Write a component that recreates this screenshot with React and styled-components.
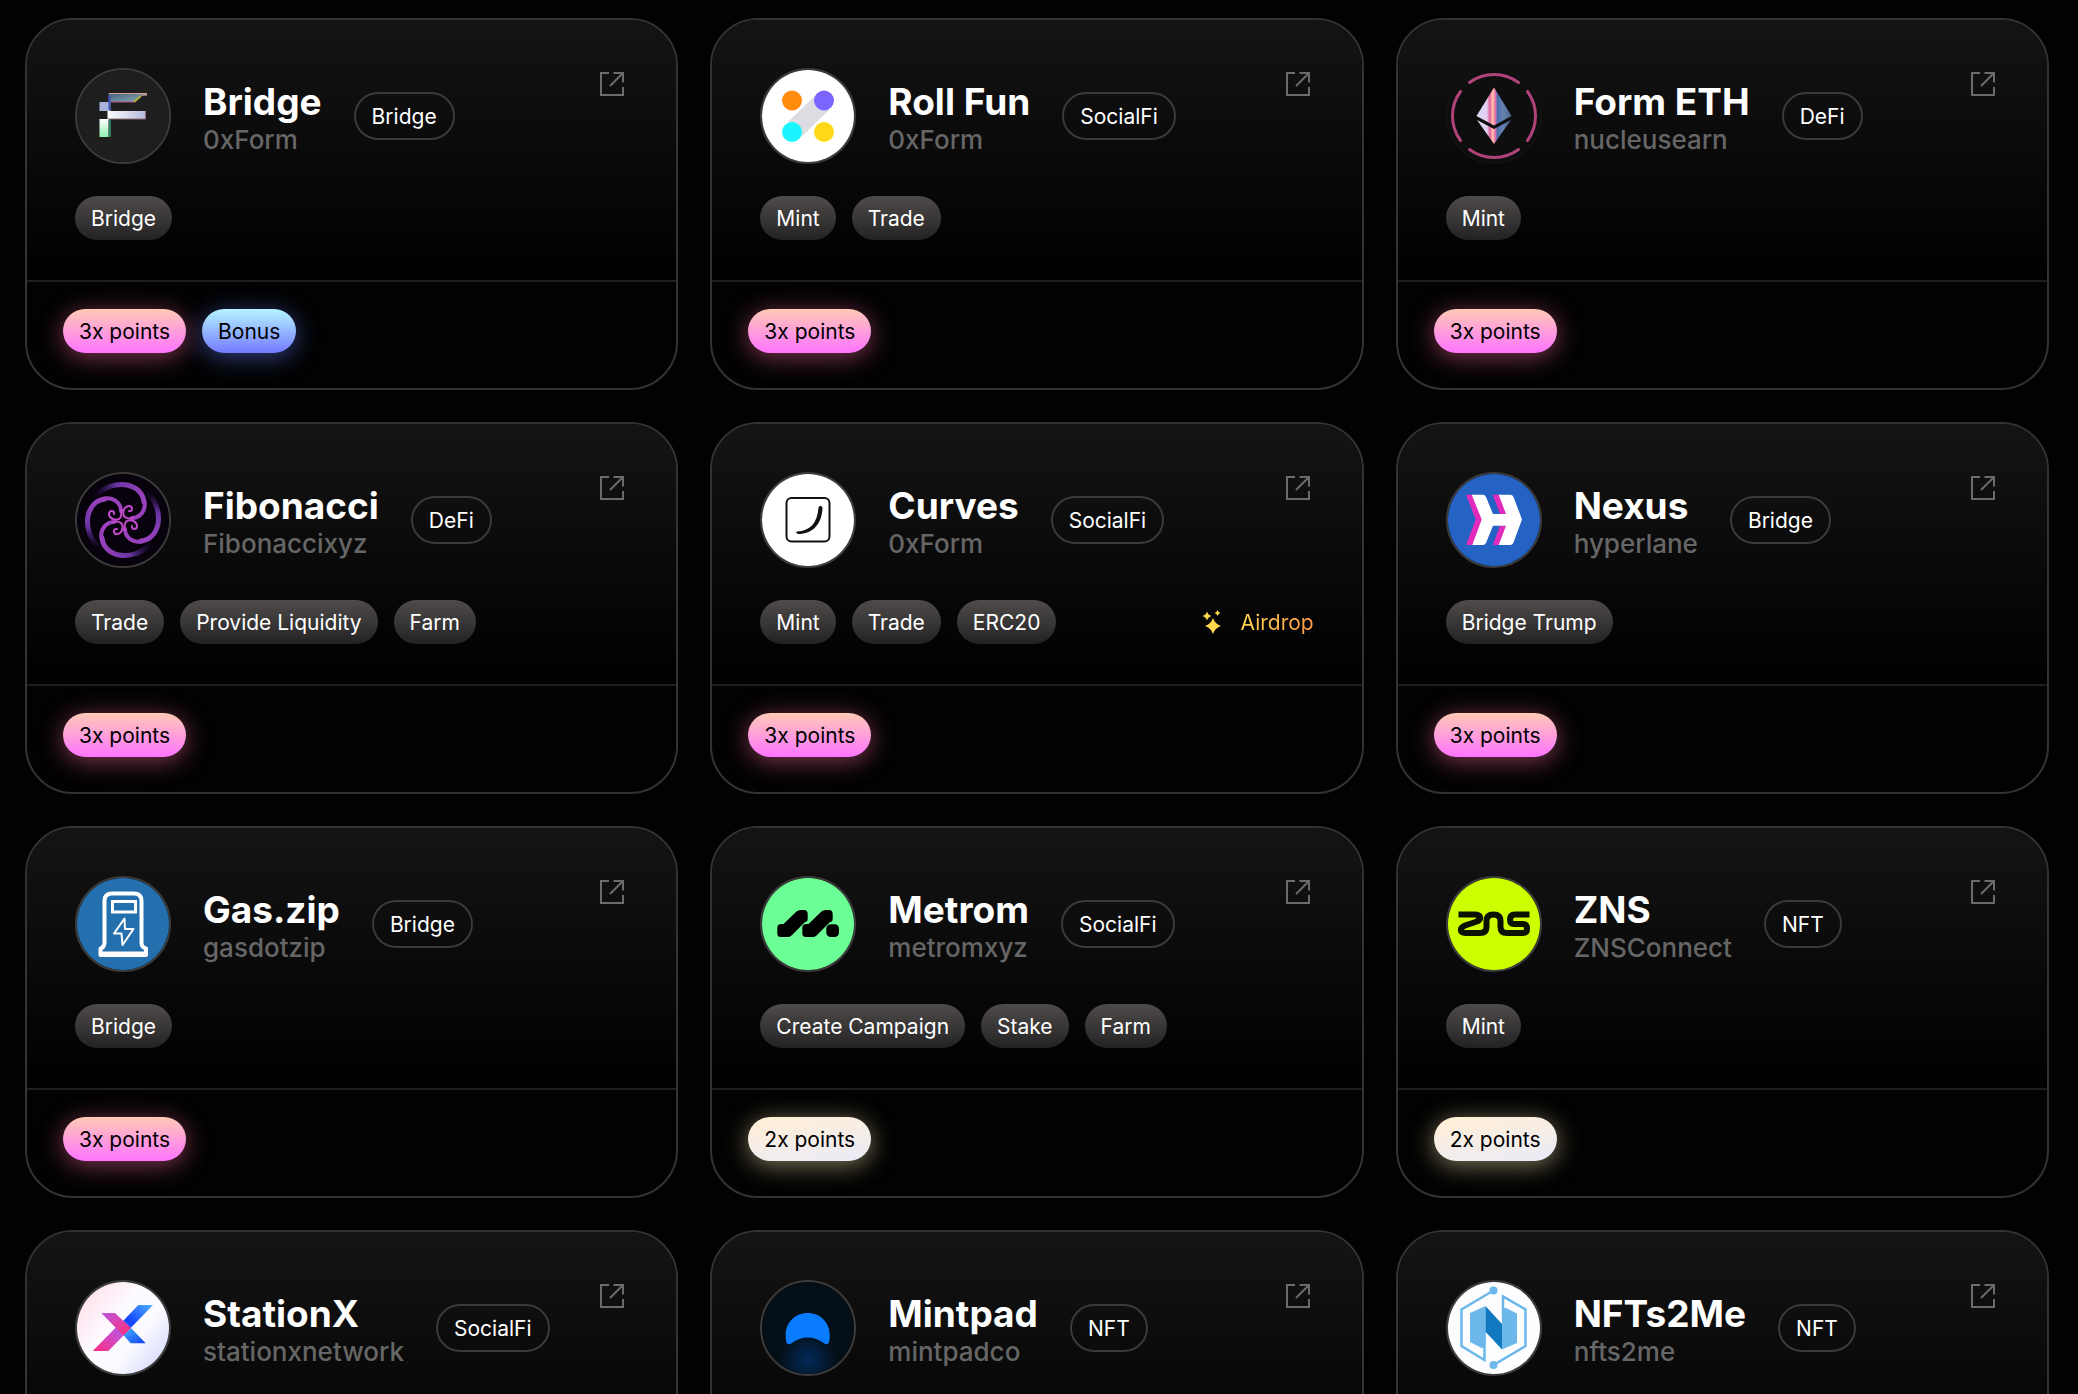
import React from "react";
import styled, { createGlobalStyle, css } from "styled-components";

const FormLogo = () => (
  <svg viewBox="2 2 92 92" aria-hidden="true">
    <defs>
      <linearGradient id="form-top" x1="0" x2="1" y1="0" y2="1">
        <stop offset="0" stopColor="#41607c" />
        <stop offset="1" stopColor="#8fb0b4" />
      </linearGradient>
      <linearGradient id="form-mid" x1="0" x2="1">
        <stop offset="0" stopColor="#fff" />
        <stop offset="1" stopColor="#b3b9dc" />
      </linearGradient>
      <linearGradient id="form-low" x1="0" x2="0" y1="0" y2="1">
        <stop offset="0" stopColor="#fff" />
        <stop offset="1" stopColor="#8ef0ae" />
      </linearGradient>
    </defs>
    <rect width="96" height="96" fill="#1e1e1e" />
    <path d="M33.5 25H72V27L66 28L59 34H33.5Z" fill="url(#form-top)" />
    <path d="M34 25.5H72M72 27H67" stroke="#d9a093" strokeWidth="1" />
    <path d="M66 28L59 34" stroke="#b3ad3e" strokeWidth="2" />
    <path d="M34 34H59" stroke="#b9518c" strokeWidth="1" />
    <rect x="24.5" y="34" width="11" height="9" fill="#a9b4da" />
    <path d="M34.5 28V42" stroke="#3c4fb4" strokeWidth="2" />
    <rect x="32.5" y="43" width="38" height="8" fill="url(#form-mid)" />
    <path d="M32.5 51H70.5V43" fill="none" stroke="#8b6a72" strokeWidth="1" />
    <rect x="24.5" y="51" width="9" height="18" fill="url(#form-low)" />
    <path d="M35 51V69" stroke="#2f7d5c" strokeWidth="2" />
  </svg>
);

const RollLogo = () => (
  <svg viewBox="2 2 92 92" aria-hidden="true">
    <rect width="96" height="96" fill="#fff" />
    <path d="M35 61L62 35" stroke="#dddce3" strokeWidth="20" />
    <circle cx="32" cy="32.5" r="10" fill="#ff8c0a" />
    <circle cx="64" cy="32.5" r="10" fill="#7a66ff" />
    <circle cx="32" cy="64" r="10" fill="#19f5ff" />
    <circle cx="64" cy="64" r="10" fill="#ffd817" />
  </svg>
);

const FormEthLogo = () => (
  <svg viewBox="2 2 92 92" aria-hidden="true">
    <defs>
      <linearGradient id="eth-body" x1="0" x2="1">
        <stop offset="0" stopColor="#d9dcf8" />
        <stop offset="0.3" stopColor="#e3cdf0" />
        <stop offset="0.38" stopColor="#e05f9c" />
        <stop offset="0.46" stopColor="#ffc4ae" />
        <stop offset="0.54" stopColor="#e46fa6" />
        <stop offset="0.6" stopColor="#4a6fae" />
        <stop offset="0.75" stopColor="#6483ae" />
        <stop offset="1" stopColor="#4d648f" />
      </linearGradient>
    </defs>
    <rect width="96" height="96" fill="#0e0e0e" />
    <g fill="none" stroke="#b0447a" strokeWidth="3" strokeLinecap="round">
      <path d="M23.5 14.5A41.5 41.5 0 0 1 72.5 14.5" />
      <path d="M23.5 81.5A41.5 41.5 0 0 0 72.5 81.5" />
      <path d="M14.5 23.5A41.5 41.5 0 0 0 14.5 72.5" />
      <path d="M81.5 23.5A41.5 41.5 0 0 1 81.5 72.5" />
    </g>
    <path d="M48 19.5L65.5 48L48 57.5L30.5 48Z" fill="url(#eth-body)" />
    <path d="M48 61L65 52L48 76L31 52Z" fill="url(#eth-body)" />
  </svg>
);

const FibonacciLogo = () => (
  <svg viewBox="-46 -46 92 92" aria-hidden="true">
    <defs>
      <linearGradient id="fib-arm" x1="0" x2="0" y1="1" y2="0">
        <stop offset="0" stopColor="#3a1f70" stopOpacity="0" />
        <stop offset="0.45" stopColor="#6a35a6" />
        <stop offset="1" stopColor="#9a42bd" />
      </linearGradient>
    </defs>
    <rect x="-48" y="-48" width="96" height="96" fill="#08020c" />
    {[0, 90, 180, 270].map((angle) => (
      <g key={angle} transform={`rotate(${angle})`} fill="none" strokeLinecap="round">
        <path d="M-23 29C-33 20 -37 7 -35 -4C-33 -13 -27 -20 -18 -21" stroke="url(#fib-arm)" strokeWidth="5" />
        <path d="M-20 -21C-10 -24 -2 -17 -2 -9" stroke="#9a42bd" strokeWidth="4" />
        <path d="M-2 -10C-1 -6 -2 -2 -4 -1C-9 1 -14 -2 -14 -6C-14 -10 -8 -10 -9 -6" stroke="#c24bcb" strokeWidth="2" />
      </g>
    ))}
  </svg>
);

const CurvesLogo = () => (
  <svg viewBox="2 2 92 92" aria-hidden="true">
    <rect width="96" height="96" fill="#fff" />
    <rect x="26.5" y="26" width="43" height="43.5" rx="5" fill="none" stroke="#111" strokeWidth="2" />
    <path d="M58.5 35.5Q60.5 32 62.5 35.5C62 52 53 62 38 62Q35 61 37 59.5C51 59 57.5 50 58.5 35.5Z" fill="#111" />
  </svg>
);

const NexusLogo = () => (
  <svg viewBox="2 2 92 92" aria-hidden="true">
    <rect width="96" height="96" fill="#2463c4" />
    <g fill="#e02bbd">
      <path d="M20 22.7H27L37 47.5L27 73H20L29.7 47.5Z" />
      <path d="M46.7 22.7H54L61 42H54Z" />
      <path d="M46.7 73H54L61 53.7H54Z" />
    </g>
    <path
      d="M25.7 22.7H37Q39 22.7 40 25L47 42H60L52.7 22.7H64Q66.5 22.7 67.5 25L76 47.5L67.5 70.5Q66.5 73 64 73H52.7L60 53.7H47L40 71Q39 73 37 73H26.3L35.7 47.5Z"
      fill="#fff"
    />
  </svg>
);

const GasLogo = () => (
  <svg viewBox="2 2 92 92" aria-hidden="true">
    <rect width="96" height="96" fill="#246fad" />
    <g fill="none" stroke="#fff" strokeLinejoin="round">
      <path
        d="M25.5 79V72.5Q29.5 71 29.5 67V25Q29.5 17.5 37 17.5H59Q66.5 17.5 66.5 25V67Q66.5 71 71 72.5V79Z"
        strokeWidth="4"
      />
      <path d="M26 77.5H71" strokeWidth="4" />
      <rect x="37.5" y="25.5" width="23" height="10.5" strokeWidth="3" strokeLinejoin="miter" />
      <path d="M49.5 42.5L39 57.5H46.5L47.5 69L58.5 53H50Z" strokeWidth="2" />
    </g>
  </svg>
);

const MetromLogo = () => {
  const slash =
    "M21 61Q17.3 61 17.3 57.5V52Q17.3 48 21.5 48H23.5L36.5 35.5Q38 34 40.5 34H44Q47.7 34 47.7 38V43Q47.7 46 45 46L31.5 59.5Q30 61 27.5 61Z";
  return (
    <svg viewBox="2 2 92 92" aria-hidden="true">
      <rect width="96" height="96" fill="#6cff95" />
      <path d={slash} />
      <path d={slash} transform="translate(25 0)" />
      <rect x="66.3" y="48.3" width="12.7" height="12.7" rx="4.5" />
    </svg>
  );
};

const ZnsLogo = () => (
  <svg viewBox="2 2 92 92" aria-hidden="true">
    <rect width="96" height="96" fill="#ccff00" />
    <path
      d="M12.5 38.5H28C36 38.5 36 44 29.5 46L19 49.5C13 52 14 57 19 57H34Q40.5 57 40.5 51V45Q40.5 38.5 47.5 38.5Q54.5 38.5 54.5 45V51Q54.5 57 61 57H77Q81 57 81 52.7Q81 48 77 48H68Q64 48 64 43.5Q64 38.5 69 38.5H83.5"
      fill="none"
      stroke="#0c1200"
      strokeWidth="6"
    />
  </svg>
);

const StationLogo = () => (
  <svg viewBox="2 2 92 92" aria-hidden="true">
    <defs>
      <linearGradient id="sx-bg" x1="0" x2="1" y1="0.1" y2="0.9">
        <stop offset="0.1" stopColor="#ffe2ee" />
        <stop offset="0.4" stopColor="#fdfbff" />
        <stop offset="0.65" stopColor="#fafaff" />
        <stop offset="1" stopColor="#ccd3fb" />
      </linearGradient>
      <linearGradient id="sx-pink" x1="0" x2="1" y1="0" y2="1">
        <stop offset="0" stopColor="#b958e0" />
        <stop offset="1" stopColor="#ff2c74" />
      </linearGradient>
      <linearGradient id="sx-tail" x1="1" x2="0" y1="0" y2="1">
        <stop offset="0.2" stopColor="#c054d8" />
        <stop offset="1" stopColor="#ff2c80" />
      </linearGradient>
      <linearGradient id="sx-blue" x1="0" x2="1" y1="1" y2="0">
        <stop offset="0.3" stopColor="#1648ff" />
        <stop offset="1" stopColor="#4fb4ff" />
      </linearGradient>
      <linearGradient id="sx-foot" x1="0" x2="1" y1="0" y2="1">
        <stop offset="0.2" stopColor="#3d9bff" />
        <stop offset="1" stopColor="#1040f0" />
      </linearGradient>
    </defs>
    <rect width="96" height="96" fill="url(#sx-bg)" />
    <path d="M63.3 25H78L55.7 48L48.3 40.7Z" fill="url(#sx-blue)" />
    <path d="M17.7 71H33.3L49 55L41 47.3Z" fill="url(#sx-tail)" />
    <path d="M48.3 55L56 48L70.7 63.3H55.7Z" fill="url(#sx-foot)" />
    <path d="M26.3 33H40L56 48L48.3 55.5Z" fill="url(#sx-pink)" />
  </svg>
);

const MintpadLogo = () => (
  <svg viewBox="2 2 92 92" aria-hidden="true">
    <defs>
      <radialGradient id="mp-glow" cx="0.5" cy="0.83" r="0.3">
        <stop offset="0" stopColor="#032a58" />
        <stop offset="1" stopColor="#040f18" />
      </radialGradient>
    </defs>
    <rect width="96" height="96" fill="url(#mp-glow)" />
    <path
      d="M25.7 55C25.7 42 35.5 33 47.7 33C60 33 69.7 42 69.7 55C69.7 58 69.5 61 68.7 63Q67 65.5 64 63.3C54 55.5 41.5 55.5 31.5 63.3Q28.5 65.5 26.7 63C26 61 25.7 58 25.7 55Z"
      fill="#0a7cff"
    />
  </svg>
);

const NftsLogo = () => (
  <svg viewBox="2 2 92 92" aria-hidden="true">
    <rect width="96" height="96" fill="#fdfdff" />
    <g fill="#6cb8ea">
      <path d="M24 33L39.5 26V64L36.5 68.5L24 62Z" />
      <path d="M56 31L59 27.5L71 33.5V63L56 69.5Z" />
      <circle cx="47.5" cy="10.5" r="4" />
      <circle cx="47.5" cy="85" r="4" />
    </g>
    <g fill="none" stroke="#6cb8ea" strokeWidth="2.5">
      <path d="M47.5 10.5L15.5 29.5V66L38.5 80V51" />
      <path d="M47.5 85L79.5 66V29.5L57 16.5V40" />
    </g>
    <path d="M39.5 26L56 44V69.5L39.5 51.7Z" fill="#1179bf" />
  </svg>
);

const OpenIcon = () => (
  <svg width="24" height="24" viewBox="0 0 24 24" fill="none" stroke="currentColor" strokeWidth="2" aria-hidden="true">
    <path d="M9 1H1V23H23V15" />
    <path d="M13.5 1H23V10.5" />
    <path d="M22.5 1.5L10 14" />
  </svg>
);

const SparklesIcon = () => (
  <svg width="24" height="24" viewBox="0 0 24 24" fill="#ffd84d" aria-hidden="true">
    <path d="M12 8Q14 14 20 16Q14 18 12 24Q10 18 4 16Q10 14 12 8Z" />
    <path d="M6 1.5Q7 5 10.5 6Q7 7 6 10.5Q5 7 1.5 6Q5 5 6 1.5Z" />
    <path d="M16.5 0Q17.2 2.3 19.5 3Q17.2 3.7 16.5 6Q15.8 3.7 13.5 3Q15.8 2.3 16.5 0Z" />
  </svg>
);

const projects = [
  { name: "Bridge", handle: "0xForm", type: "Bridge", Logo: FormLogo, actions: ["Bridge"], points: 3, bonus: true },
  { name: "Roll Fun", handle: "0xForm", type: "SocialFi", Logo: RollLogo, actions: ["Mint", "Trade"], points: 3 },
  { name: "Form ETH", handle: "nucleusearn", type: "DeFi", Logo: FormEthLogo, ring: "#121212", actions: ["Mint"], points: 3 },
  { name: "Fibonacci", handle: "Fibonaccixyz", type: "DeFi", Logo: FibonacciLogo, actions: ["Trade", "Provide Liquidity", "Farm"], points: 3 },
  { name: "Curves", handle: "0xForm", type: "SocialFi", Logo: CurvesLogo, actions: ["Mint", "Trade", "ERC20"], points: 3, airdrop: true },
  { name: "Nexus", handle: "hyperlane", type: "Bridge", Logo: NexusLogo, actions: ["Bridge Trump"], points: 3 },
  { name: "Gas.zip", handle: "gasdotzip", type: "Bridge", Logo: GasLogo, actions: ["Bridge"], points: 3 },
  { name: "Metrom", handle: "metromxyz", type: "SocialFi", Logo: MetromLogo, actions: ["Create Campaign", "Stake", "Farm"], points: 2 },
  { name: "ZNS", handle: "ZNSConnect", type: "NFT", Logo: ZnsLogo, actions: ["Mint"], points: 2 },
  { name: "StationX", handle: "stationxnetwork", type: "SocialFi", Logo: StationLogo, actions: [] },
  { name: "Mintpad", handle: "mintpadco", type: "NFT", Logo: MintpadLogo, actions: [] },
  { name: "NFTs2Me", handle: "nfts2me", type: "NFT", Logo: NftsLogo, actions: [] },
];

const ProjectCard = ({ name, handle, type, Logo, ring, actions, points, bonus, airdrop }) => (
  <Card>
    <CardBody>
      <Header>
        <Avatar $ring={ring}>
          <Logo />
        </Avatar>
        <Names>
          <Title>{name}</Title>
          <Handle>{handle}</Handle>
        </Names>
        <TypeBadge>{type}</TypeBadge>
        <OpenLink href={`#${handle}`} aria-label={`Open ${name}`}>
          <OpenIcon />
        </OpenLink>
      </Header>
      <Actions>
        {actions.map((action) => (
          <Pill key={action}>{action}</Pill>
        ))}
        {airdrop && (
          <Airdrop>
            <SparklesIcon />
            <AirdropText>Airdrop</AirdropText>
          </Airdrop>
        )}
      </Actions>
    </CardBody>
    <CardFooter>
      {points && <Pill $tone={points === 3 ? "pink" : "cream"}>{points}x points</Pill>}
      {bonus && <Pill $tone="blue">Bonus</Pill>}
    </CardFooter>
  </Card>
);

const App = () => (
  <>
    <GlobalStyle />
    <Grid>
      {projects.map((project) => (
        <ProjectCard key={project.name} {...project} />
      ))}
    </Grid>
  </>
);

export default App;

const GlobalStyle = createGlobalStyle`
  * {
    box-sizing: border-box;
  }

  body {
    margin: 0;
    background: #020202;
    color: #fff;
    font-family: Inter, "Liberation Sans", sans-serif;
    -webkit-font-smoothing: antialiased;
  }
`;

const Grid = styled.main`
  display: grid;
  grid-template-columns: repeat(3, minmax(0, 1fr));
  gap: 32px;
  padding: 18px 29px 32px 25px;

  @media (max-width: 1600px) {
    grid-template-columns: repeat(2, minmax(0, 1fr));
  }

  @media (max-width: 1000px) {
    grid-template-columns: 1fr;
  }
`;

const Card = styled.article`
  border: 2px solid #333;
  border-radius: 48px;
  overflow: hidden;
`;

const CardBody = styled.div`
  display: flex;
  flex-direction: column;
  gap: 32px;
  padding: 48px 48px 40px;
  background: linear-gradient(180deg, #141414 0%, #000 100%);
`;

const Header = styled.div`
  display: flex;
  align-items: center;
  gap: 32px;
`;

const Avatar = styled.div`
  flex: none;
  width: 96px;
  height: 96px;
  border: 2px solid ${({ $ring }) => $ring || "#3c3c3c"};
  border-radius: 50%;
  overflow: hidden;

  svg {
    display: block;
    width: 100%;
    height: 100%;
  }
`;

const Names = styled.div`
  min-width: 0;
`;

const Title = styled.h2`
  margin: 0;
  font-size: 37px;
  font-weight: 700;
  line-height: 48px;
  white-space: nowrap;
`;

const Handle = styled.p`
  margin: 0;
  color: #666;
  font-size: 26px;
  font-weight: 500;
  line-height: 28px;
`;

const TypeBadge = styled.span`
  display: flex;
  align-items: center;
  height: 48px;
  padding: 0 16px;
  border: 2px solid #3a3a3a;
  border-radius: 24px;
  font-size: 21px;
`;

const OpenLink = styled.a`
  align-self: flex-start;
  margin-left: auto;
  padding: 4px;
  color: #6b6b6b;

  svg {
    display: block;
  }

  &:hover {
    color: #fff;
  }
`;

const Actions = styled.div`
  display: flex;
  flex-wrap: wrap;
  gap: 16px;
  min-height: 44px;
`;

const tones = {
  pink: css`
    background: linear-gradient(180deg, #ffcab5 0%, #ff74ff 100%);
    box-shadow: 0 4px 24px rgba(255, 110, 160, 0.5);
    color: #000;
  `,
  blue: css`
    background: linear-gradient(180deg, #b5f5ff 0%, #7479ff 100%);
    box-shadow: 0 4px 24px rgba(100, 130, 255, 0.5);
    color: #000;
  `,
  cream: css`
    background: linear-gradient(170deg, #ffeed8 10%, #ececf5 90%);
    box-shadow: 0 4px 24px rgba(255, 240, 180, 0.5);
    color: #000;
  `,
};

const Pill = styled.span`
  display: flex;
  align-items: center;
  height: 44px;
  padding: 0 16px;
  border-radius: 22px;
  background: linear-gradient(180deg, #4f4b4a 0%, #232223 100%);
  font-size: 21px;
  white-space: nowrap;
  ${({ $tone }) => $tone && tones[$tone]}
`;

const Airdrop = styled.span`
  display: flex;
  align-items: center;
  gap: 16px;
  margin-left: auto;
`;

const AirdropText = styled.span`
  background: linear-gradient(90deg, #ffd84d 0%, #ff9a4a 100%);
  background-clip: text;
  color: transparent;
  font-size: 21px;
`;

const CardFooter = styled.div`
  display: flex;
  gap: 16px;
  min-height: 108px;
  padding: 27px 36px 35px;
  border-top: 2px solid #1e1e1e;
`;
